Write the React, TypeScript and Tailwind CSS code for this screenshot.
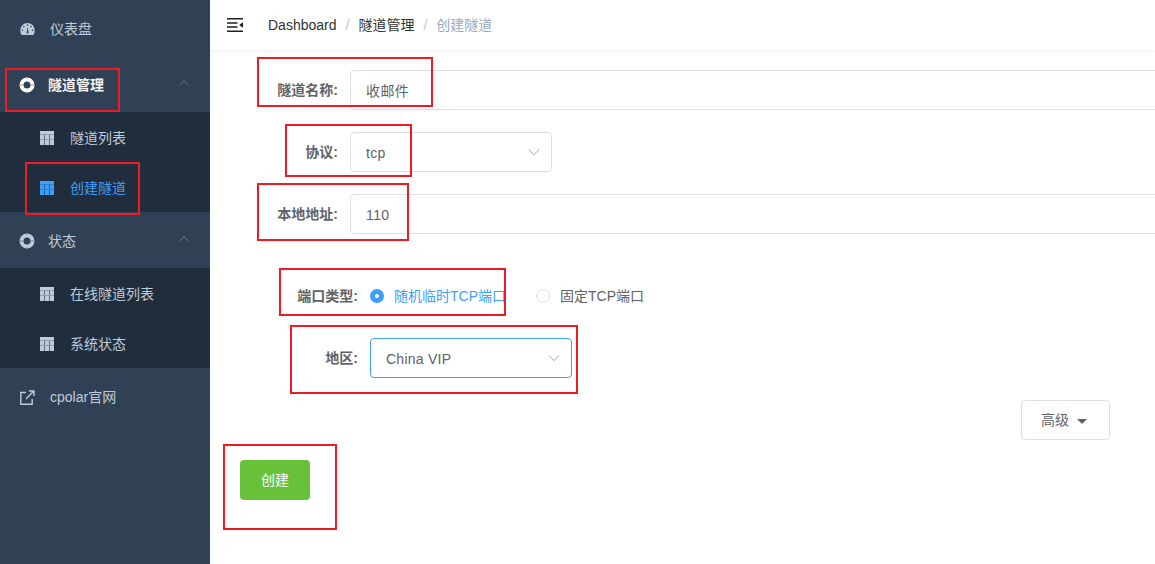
import React from 'react';

const font = "font-['Liberation_Sans','Noto_Sans_CJK_SC',sans-serif]";

function GaugeIcon() {
  return (
    <svg className="mt-[2px] h-[14px] w-[15px] text-[#bfcbd9]" viewBox="0 0 15 14" fill="currentColor">
      <path d="M7.5 1a7.2 7.2 0 0 0-7.2 7.2c0 1.8.5 3.3 1.4 4.8h11.6a8 8 0 0 0 1.4-4.8A7.2 7.2 0 0 0 7.5 1z" />
      <g fill="#304156">
        <circle cx="7.5" cy="3" r="0.8" />
        <circle cx="3.8" cy="4.6" r="0.8" />
        <circle cx="2.4" cy="8.2" r="0.8" />
        <circle cx="12.6" cy="8.2" r="0.8" />
        <circle cx="11" cy="4.6" r="0.8" />
        <path d="M6.6 11.6L7.4 5.4h.4l.8 6.2z" />
      </g>
    </svg>
  );
}

function RingIcon({ active }: { active?: boolean }) {
  return (
    <svg className="mt-[2px] h-[16px] w-[16px]" viewBox="0 0 16 16" fill="none">
      <circle cx="8" cy="8" r="5.5" stroke={active ? '#ffffff' : '#bfcbd9'} strokeWidth="4" />
      <path d="M0.5 8h4M11.5 8h4" stroke={active ? '#b98e5c' : '#6d8299'} strokeWidth="1" />
      <path d="M8 0.5v2M8 13.5v2" stroke={active ? '#d9c4a6' : '#8fa2b6'} strokeWidth="1" />
    </svg>
  );
}

function TableIcon({ active }: { active?: boolean }) {
  return (
    <svg
      className={active ? 'mt-[1px] h-[14px] w-[14px] text-[#409eff]' : 'mt-[1px] h-[14px] w-[14px] text-[#bfcbd9]'}
      viewBox="0 0 14 14"
      fill="currentColor"
    >
      <path d="M0 0h14v14H0z" />
      <path d="M4.5 4V14M9.5 4V14" stroke={active ? '#1f5f9f' : '#5f6d7d'} strokeWidth="1" />
      <path d="M0 3.5h14M0 8.5h14" stroke={active ? '#2f7fd0' : '#8f9cab'} strokeWidth="1" />
    </svg>
  );
}

function LinkIcon() {
  return (
    <svg className="mt-[2px] h-[15px] w-[15px] text-[#bfcbd9]" viewBox="0 0 15 15" fill="none" stroke="currentColor" strokeWidth="1.4">
      <path d="M6 2.5H.8v11.7h11.4V9" />
      <path d="M6 9l7-7.2M9 1h5v5" />
    </svg>
  );
}

function Chevron({ className }: { className: string }) {
  return (
    <svg className={className} viewBox="0 0 12 12" fill="none" stroke="currentColor" strokeWidth="1">
      <path d="M1.5 8.2L6 3.8l4.5 4.4" />
    </svg>
  );
}

function ParentRow({ text, active }: { text: string; active?: boolean }) {
  return (
    <div className="flex h-[56px] items-center pl-[19px] pr-[20px]">
      <RingIcon active={active} />
      <span className={active ? 'ml-[13px] mt-[2px] text-sm font-bold text-[#f4f4f5]' : 'ml-[13px] mt-[2px] text-sm text-[#bfcbd9]'}>{text}</span>
      <Chevron className="ml-auto mb-[3px] h-3 w-3 text-[#6b7c90]" />
    </div>
  );
}

function SubRow({ text, active }: { text: string; active?: boolean }) {
  return (
    <div className="flex h-[50px] items-center pl-[40px]">
      <TableIcon active={active} />
      <span className={active ? 'ml-4 mt-[2px] text-sm text-[#409eff]' : 'ml-4 mt-[2px] text-sm text-[#bfcbd9]'}>{text}</span>
    </div>
  );
}

function LinkRow({ text, icon }: { text: string; icon: React.ReactNode }) {
  return (
    <div className="flex h-[56px] items-center pl-[20px]">
      <span className="flex w-[15px] justify-center">{icon}</span>
      <span className="ml-[15px] mt-[2px] text-sm text-[#bfcbd9]">{text}</span>
    </div>
  );
}

function Sidebar() {
  return (
    <aside className="h-full w-[210px] shrink-0 bg-[#304156]">
      <LinkRow text="仪表盘" icon={<GaugeIcon />} />
      <ParentRow text="隧道管理" active />
      <div className="bg-[#1f2d3d]">
        <SubRow text="隧道列表" />
        <SubRow text="创建隧道" active />
      </div>
      <ParentRow text="状态" />
      <div className="bg-[#1f2d3d]">
        <SubRow text="在线隧道列表" />
        <SubRow text="系统状态" />
      </div>
      <LinkRow text="cpolar官网" icon={<LinkIcon />} />
    </aside>
  );
}

function Header() {
  return (
    <header className="relative flex h-[50px] items-center bg-white pl-[17px] shadow-[0_1px_4px_rgba(0,21,41,0.08)]">
      <svg className="h-[14px] w-[16px] text-[#1f1f1f]" viewBox="0 0 16 14" fill="currentColor">
        <path d="M0 0h16v1.5H0zM0 4.2h10.5v1.5H0zM0 8.2h10.5v1.5H0zM0 12.4h16v1.5H0z" />
        <path d="M16 4.2v5.5l-3.8-2.75z" />
      </svg>
      <nav className="ml-[25px] flex items-center text-sm">
        <span className="text-[#303133]">Dashboard</span>
        <span className="mx-[9px] text-[#c0c4cc]">/</span>
        <span className="text-[#303133]">隧道管理</span>
        <span className="mx-[9px] text-[#c0c4cc]">/</span>
        <span className="text-[#97a8be]">创建隧道</span>
      </nav>
    </header>
  );
}

function Field({ label, wide, children }: { label: string; wide?: boolean; children: React.ReactNode }) {
  return (
    <div className="mb-[22px] flex h-10 items-center">
      <label className={wide ? 'w-[148px] shrink-0 pr-3 text-right text-sm font-bold text-[#606266]' : 'w-[128px] shrink-0 pr-3 text-right text-sm font-bold text-[#606266]'}>
        {label}
      </label>
      {children}
    </div>
  );
}

function TextBox({ value }: { value: string }) {
  return (
    <div className="flex h-10 w-[1000px] shrink-0 items-center rounded border border-[#dcdfe6] px-[15px] pt-[2px] text-sm tracking-[0.4px] text-[#606266]">
      {value}
    </div>
  );
}

function SelectBox({ value, focused }: { value: string; focused?: boolean }) {
  return (
    <div
      className={
        focused
          ? 'flex h-10 w-[202px] items-center justify-between rounded border border-[#409eff] pl-[15px] pr-[10px] text-sm tracking-[0.25px] text-[#606266]'
          : 'flex h-10 w-[202px] items-center justify-between rounded border border-[#dcdfe6] pl-[15px] pr-[10px] text-sm tracking-[0.25px] text-[#606266]'
      }
    >
      <span className="pt-[2px]">{value}</span>
      <Chevron className="h-[14px] w-[14px] rotate-180 text-[#c0c4cc]" />
    </div>
  );
}

function Radio({ text, checked }: { text: string; checked?: boolean }) {
  return (
    <div className={checked ? 'mr-[30px] flex items-center text-sm text-[#409eff]' : 'flex items-center text-sm text-[#606266]'}>
      <span
        className={
          checked
            ? 'flex h-[14px] w-[14px] items-center justify-center rounded-full bg-[#409eff]'
            : 'h-[14px] w-[14px] rounded-full border border-[#dcdfe6]'
        }
      >
        {checked && <span className="h-1 w-1 rounded-full bg-white" />}
      </span>
      <span className="ml-[10px]">{text}</span>
    </div>
  );
}

const notes = [
  'left-[5px] top-[68px] h-[44px] w-[115px]',
  'left-[25px] top-[162px] h-[53px] w-[115px]',
  'left-[257px] top-[57px] h-[50px] w-[176px]',
  'left-[285px] top-[124px] h-[53px] w-[127px]',
  'left-[257px] top-[183px] h-[58px] w-[152px]',
  'left-[279px] top-[268px] h-[48px] w-[227px]',
  'left-[290px] top-[325px] h-[69px] w-[288px]',
  'left-[223px] top-[444px] h-[86px] w-[114px]',
];

export default function App() {
  return (
    <div className={`relative flex h-[564px] w-[1155px] overflow-hidden bg-white ${font}`}>
      <Sidebar />
      <div className="min-w-0 flex-1">
        <Header />
        <main className="pl-[12px] pt-[20px]">
          <Field label="隧道名称:">
            <TextBox value="收邮件" />
          </Field>
          <Field label="协议:">
            <SelectBox value="tcp" />
          </Field>
          <Field label="本地地址:">
            <TextBox value="110" />
          </Field>
          <div className="mb-[22px] mt-[42px] flex h-10 items-center">
            <label className="w-[148px] shrink-0 pr-3 text-right text-sm font-bold text-[#606266]">端口类型:</label>
            <Radio text="随机临时TCP端口" checked />
            <Radio text="固定TCP端口" />
          </div>
          <Field label="地区:" wide>
            <SelectBox value="China VIP" focused />
          </Field>
          <div className="flex justify-end pr-[45px]">
            <button className="flex h-10 w-[89px] items-center justify-center gap-2 rounded border border-[#dcdfe6] bg-white pr-[3px] text-sm text-[#606266]">
              高级
              <span className="mt-[2px] h-0 w-0 border-x-[5px] border-t-[5px] border-x-transparent border-t-[#606266]" />
            </button>
          </div>
          <button className="ml-[18px] mt-[20px] h-10 w-[70px] rounded bg-[#67c23a] text-sm text-white">创建</button>
        </main>
      </div>
      {notes.map((n) => (
        <div key={n} className={`pointer-events-none absolute border-2 border-[#ed1c24] ${n}`} />
      ))}
    </div>
  );
}
